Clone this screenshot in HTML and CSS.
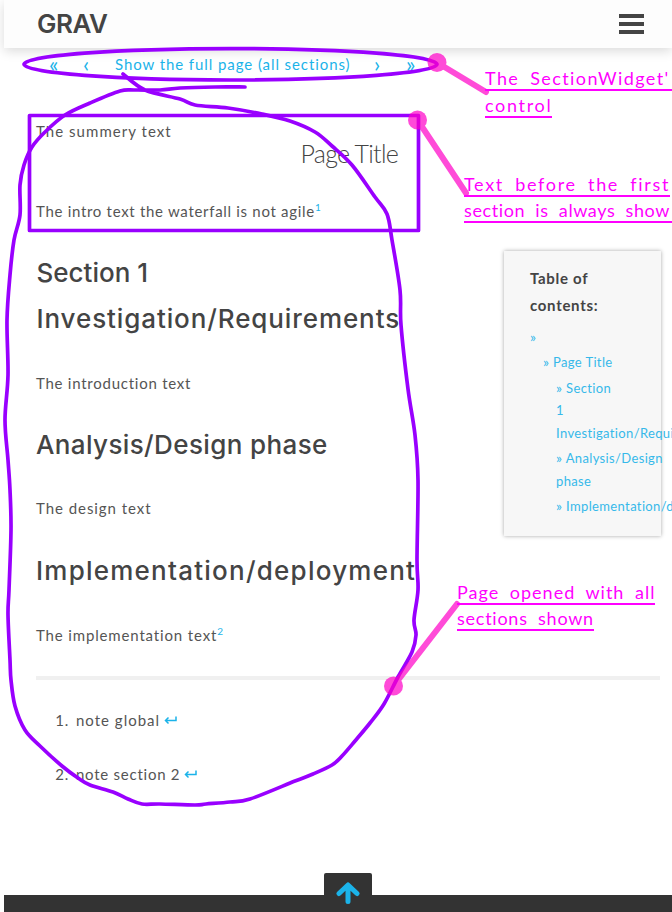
FILE: index.html
```html
<!DOCTYPE html>
<html lang="en">
<head>
<meta charset="utf-8">
<title>Grav</title>
<link rel="stylesheet" href="styles.css">
</head>
<body>
<div class="page">
  <header class="header">
    <span class="logo">GRAV</span>
    <span class="burger"><i></i><i></i><i></i></span>
  </header>
  <nav class="pager">
    <a class="first">«</a><a class="prev">‹</a><a class="all">Show the full page (all sections)</a><a class="next">›</a><a class="last">»</a>
  </nav>
  <main class="content">
    <div class="columns">
      <article class="article">
        <p class="t-summary">The summery text</p>
        <h1>Page Title</h1>
        <p class="intro">The intro text the waterfall is not agile<sup>1</sup></p>
        <h2><span class="h-section">Section 1</span><br><span class="h-invest">Investigation/Requirements</span></h2>
        <p>The introduction text</p>
        <h2 class="h-analysis">Analysis/Design phase</h2>
        <p>The design text</p>
        <h2 class="h-impl">Implementation/deployment</h2>
        <p>The implementation text<sup>2</sup></p>
      </article>
      <aside class="toc">
        <h3>Table of contents:</h3>
        <a class="top"><b>»</b></a>
        <a class="l1"><b>»</b> Page Title</a>
        <a class="l2"><b>»</b> Section<br>1<br>Investigation/Requirements</a>
        <a class="l2"><b>»</b> Analysis/Design<br>phase</a>
        <a class="l2"><b>»</b> Implementation/deployment</a>
      </aside>
    </div>
    <hr>
    <ol class="notes">
      <li><span class="num">1.</span><span class="global">note global</span><svg class="back" viewBox="0 0 13 9"><path d="M12 0.5V4.5H1.5M4.5 1.5L1.5 4.5L4.5 7.5"/></svg></li>
      <li><span class="num">2.</span><span>note section 2</span><svg class="back" viewBox="0 0 13 9"><path d="M12 0.5V4.5H1.5M4.5 1.5L1.5 4.5L4.5 7.5"/></svg></li>
    </ol>
  </main>
  <footer class="footer">
    <a class="totop"><svg viewBox="0 0 24 22"><path d="M12 19.5V3.5M3 11.5L12 3L21 11.5"/></svg></a>
  </footer>
</div>
<svg class="ink" viewBox="0 0 672 912">
  <g class="pen">
    <ellipse cx="230.5" cy="64.3" rx="206.5" ry="15.7"/>
    <rect x="29.5" y="115.5" width="389" height="115"/>
    <path id="loop"/>
  </g>
  <g class="callout">
    <path d="M437 62.5L486 92M417.5 120L466 193M393.5 686L457 604"/>
    <circle cx="437" cy="62.5" r="9.5"/>
    <circle cx="417.5" cy="120" r="9.5"/>
    <circle cx="393.5" cy="686" r="9.5"/>
  </g>
</svg>
<div class="note n1"><span class="wide">The SectionWidget'</span><span class="loose">control</span></div>
<div class="note n2"><span class="loose">Text before the first</span><span class="wide">section is always show</span></div>
<div class="note n3"><span>Page opened with all</span><span class="tight">sections shown</span></div>
<script src="loop.js"></script>
</body>
</html>
```
FILE: styles.css
```css
* { box-sizing: border-box; }
body { margin: 0; width: 672px; height: 912px; overflow: hidden; position: relative; background: #fff; color: #555; font: 15px/26px Lato, sans-serif; }
.page { margin-left: 4px; height: 912px; display: flex; flex-direction: column; }
.header { flex: 0 0 48px; height: 48px; display: flex; justify-content: space-between; align-items: center; padding: 0 28px 0 33px; background: #fdfdfd; box-shadow: 0 3px 11px rgba(0,0,0,.15); }
.logo { font: 600 26px/48px Inter, sans-serif; letter-spacing: -.5px; color: #444; }
.burger { width: 25px; display: grid; gap: 4px; }
.burger i { height: 4px; background: #444; }
.pager { height: 32px; display: flex; align-items: center; padding-left: 45px; color: #1bb3e9; white-space: nowrap; letter-spacing: .92px; }
.pager .first { width: 34px; font-size: 22px; }
.pager .prev { width: 32px; font-size: 22px; }
.pager .all { width: 259px; }
.pager .next { width: 32px; font-size: 22px; }
.pager .last { font-size: 22px; }
.content { padding: 38px 12px 0 32px; flex: 1; min-width: 0; }
.columns { display: flex; }
.article { flex: 0 0 468px; white-space: nowrap; }
p { margin: 28px 0 0; height: 26px; letter-spacing: .9px; }
p.t-summary { margin: 0; letter-spacing: 1.05px; }
h1 { margin: 0; width: 362px; text-align: right; color: #444; font: 300 25px/18px Lato, sans-serif; letter-spacing: -.75px; }
p.intro { margin-top: 36px; letter-spacing: .7px; }
sup { font-size: 10px; line-height: 0; vertical-align: 6px; color: #1bb3e9; letter-spacing: 0; }
h2 { margin: 26px 0 0; font: 500 26px/46px Inter, sans-serif; height: 46px; color: #444; }
h2:has(br) { height: 92px; }
h2 + p { letter-spacing: .75px; }
.h-section, .h-invest { margin-left: .5px; }
.h-invest { letter-spacing: .9px; }
.h-analysis { letter-spacing: .38px; }
h2.h-impl { margin-top: 27px; letter-spacing: 1.24px; }
.h-analysis + p { margin-top: 27px; letter-spacing: .95px; }
.h-impl + p { letter-spacing: .85px; }
.toc { margin-top: 132.5px; flex: 0 0 157px; width: 157px; min-width: 0; height: 285px; padding: 14px 0 0 26px; background: #f7f7f7; box-shadow: 0 0 4px rgba(0,0,0,.35); color: #36b9ea; font-size: 13px; line-height: 22.5px; white-space: nowrap; letter-spacing: .36px; }
h3 { width: 95px; margin: 0 0 7px; white-space: normal; font: bold 15px/27px Lato, sans-serif; letter-spacing: .7px; color: #444; }
.toc a { display: block; margin-bottom: 3px; }
.toc b { font-weight: 400; font-size: 14px; line-height: 0; }
.l1 { padding-left: 13px; }
.l2 { padding-left: 26px; }
hr { margin: 28px 0 27px; height: 4px; border: 0; background: #f0f0f0; }
.notes { margin: 0; padding: 0; list-style: none; letter-spacing: .75px; }
.notes li { height: 26px; margin-bottom: 28px; display: flex; align-items: center; }
.global { letter-spacing: 1px; }
.num { width: 33px; text-align: right; margin-right: 7px; }
.back { width: 13px; height: 9px; margin-left: 4px; fill: none; stroke: #1bb3e9; stroke-width: 1.5; }
.footer { height: 17px; background: #333; display: flex; justify-content: center; }
.totop { width: 48px; height: 39px; margin-top: -22px; margin-left: 20px; background: #333; border-radius: 2px 2px 0 0; padding: 9px 12px; }
.totop svg { display: block; width: 24px; height: 22px; fill: none; stroke: #1bb3e9; stroke-width: 5; stroke-linecap: round; stroke-linejoin: round; }
.ink { position: absolute; left: 0; top: 0; width: 672px; height: 912px; }
.pen { fill: none; stroke: #90f; stroke-width: 3.7; stroke-linecap: round; stroke-linejoin: round; }
.callout { opacity: .7; fill: #ff00c8; }
.callout path { fill: none; stroke: #ff00c8; stroke-width: 6; stroke-linecap: round; }
.note { position: absolute; right: 0; color: #f0f; font: 18px/26px Lato, sans-serif; letter-spacing: 1px; word-spacing: 5px; white-space: nowrap; }
.note span { display: block; width: max-content; height: 26px; border-bottom: 2px solid #f0f; }
.note .wide { width: 100%; }
.note .loose { letter-spacing: 1.68px; }
.note .tight { letter-spacing: .75px; }
.n1 { left: 485px; top: 65px; }
.n1 .wide { letter-spacing: 1.4px; }
.n1 .loose { margin-top: 1px; }
.n2 { left: 464px; top: 171px; }
.n2 .wide { letter-spacing: .6px; }
.n3 { left: 457px; top: 579px; }
```
FILE: loop.js
```js
// Freehand loop: a smooth curve through the sampled pen positions.
const pts = [[123,74],[145,90],[180,99],[195,105],[228,108],[262,114],[290,121],[315,132],[332,146],[352,165],[375,197],[387,214],[392,240],[400,290],[401,325],[408,389],[415,435],[418,480],[417,560],[418,590],[414,620],[416,635],[412,652],[398,677],[384,704],[370,723],[355,741],[342,756],[332,765],[313,774],[295,781],[250,799],[230,802],[206,804],[195,805],[160,804],[142,804],[128,799],[113,792],[90,785],[78,778],[62,766],[40,746],[25,730],[15,706],[11,680],[10,660],[8,615],[9,590],[11,530],[10,490],[8,460],[5,420],[8,375],[7,320],[10,275],[14,240],[20,215],[20,185],[24,165],[32,147],[45,132],[65,115],[90,103],[120,91],[135,90],[160,90],[180,88],[215,87],[245,87]];
let d = "M" + pts[0];
for (let i = 0; i < pts.length - 1; i++) {
  const a = pts[i - 1] || pts[i], b = pts[i], c = pts[i + 1], e = pts[i + 2] || c;
  d += `C${b[0] + (c[0] - a[0]) / 6} ${b[1] + (c[1] - a[1]) / 6} ${c[0] - (e[0] - b[0]) / 6} ${c[1] - (e[1] - b[1]) / 6} ${c}`;
}
document.getElementById("loop").setAttribute("d", d);
```
